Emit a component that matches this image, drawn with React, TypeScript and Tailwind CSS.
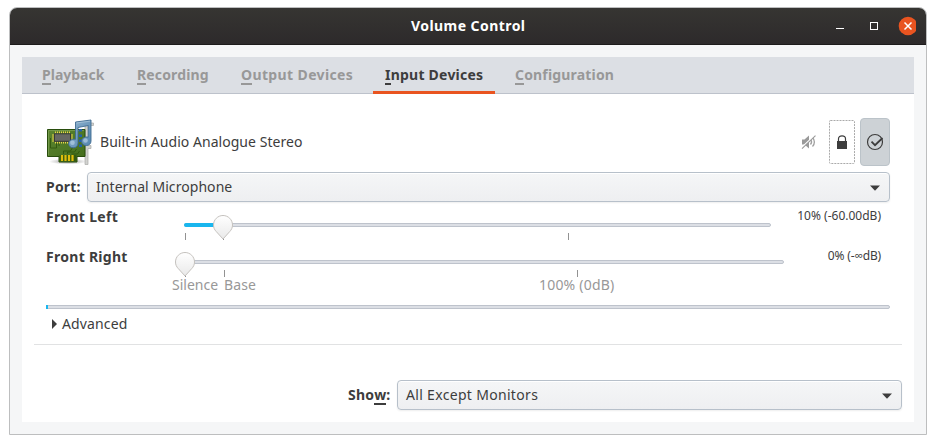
import React from 'react';

type TabProps = { label: string; active?: boolean; width: string; spacing: string };

function Tab({ label, active, width, spacing }: TabProps) {
  return (
    <div
      className={`relative flex h-[37px] shrink-0 items-center pb-[2px] pl-3 font-bold ${width} ${spacing} ${active ? 'text-[#3d3d3d]' : 'text-[#989898]'}`}
    >
      <span>
        <Mnemonic letter={label[0]} />
        {label.slice(1)}
      </span>
      {active && <div className="absolute bottom-0 left-0 h-[3px] w-[122px] bg-[#e95420]" />}
    </div>
  );
}

function Mnemonic({ letter }: { letter: string }) {
  return (
    <span className="relative inline-block">
      {letter}
      <span className="absolute bottom-0 left-0 h-[2px] w-full bg-current" />
    </span>
  );
}

function Combo({ label, width, spacing }: { label: string; width: string; spacing: string }) {
  return (
    <div
      className={`flex h-[30px] items-center justify-between rounded-[4px] border border-[#b7c0ca] bg-linear-to-b from-[#f5f6f7] to-[#eeeff1] pr-[9px] pl-2 shadow-[0_1px_2px_rgba(0,0,0,0.07),inset_0_1px_0_#fff] ${width}`}
    >
      <span className={spacing}>{label}</span>
      <svg width="10" height="6" viewBox="0 0 10 6" className="mt-px">
        <path d="M0 .5h10L5 5.700z" fill="#3d3d3d" />
      </svg>
    </div>
  );
}

function Thumb() {
  return (
    <svg width="20" height="25" viewBox="0 0 20 25" className="block">
      <defs>
        <linearGradient id="thumb" x1="0" y1="0" x2="0" y2="1">
          <stop offset="0" stopColor="#fff" />
          <stop offset="1" stopColor="#e9e9e9" />
        </linearGradient>
      </defs>
      <path
        d="M10 .5C4.800.5.5 4.700.5 10c0 2.700 1.100 4.900 2.800 6.600L10 24l6.700-7.400C18.400 14.900 19.500 12.700 19.500 10c0-5.300-4.300-9.500-9.500-9.500z"
        fill="url(#thumb)"
        stroke="#c4c1bd"
      />
    </svg>
  );
}

function SoundCard() {
  return (
    <svg width="48" height="48" viewBox="0 0 48 48">
      <defs>
        <linearGradient id="pcb" x1="0" y1="0" x2="1" y2="1">
          <stop offset="0" stopColor="#5c8530" />
          <stop offset="1" stopColor="#426c1b" />
        </linearGradient>
        <linearGradient id="note" x1="0" y1="0" x2="1" y2="1">
          <stop offset="0" stopColor="#91b4d0" />
          <stop offset="1" stopColor="#5485ae" />
        </linearGradient>
        <radialGradient id="shadow">
          <stop offset="0" stopColor="#000" stopOpacity=".4" />
          <stop offset="1" stopColor="#000" stopOpacity="0" />
        </radialGradient>
      </defs>
      <ellipse cx="22" cy="43.500" rx="19" ry="3" fill="url(#shadow)" />
      <path d="M41.500 7.500h6v-2.500h-8.500v41.500h3V30.500h3v-3h-3.500z" fill="#d1d2cf" stroke="#a9aba7" strokeWidth=".7" />
      <path d="M1.500 11.500h37.500v27h-8v5.500h-18v-5.500h-11.500z" fill="url(#pcb)" stroke="#284d0c" />
      <path d="M2.500 37.500v-25h35.500" fill="none" stroke="#80a457" strokeWidth=".7" />
      <path
        d="M4.500 20v10h6v-5M13 25v3M17.500 36v-3h7l3-5M21.500 36v-2h7l2-3M25.500 36h6l2-3"
        fill="none"
        stroke="#31570f"
        strokeWidth=".9"
      />
      <path d="M9 14.500h16M9 24.500h16" stroke="#edd44c" strokeWidth="2" strokeDasharray="1 1" />
      <path d="M7 16.500v7M26 16.500v7" stroke="#edd44c" strokeWidth="2" strokeDasharray="1 1" />
      <rect x="8.500" y="15.800" width="16" height="7.500" fill="#666863" stroke="#373936" />
      <path d="M13.500 37h17v6h-17z" fill="#345a10" />
      <path d="M16 37v6M19.500 37v6M23 37v6M26.500 37v6" stroke="#dfbd0d" strokeWidth="2.200" />
      <path d="M33 11h3v2.500h-3zm0 5.500h3v2.500h-3zm0 5h3v2.500h-3zm0 5h3v2.500h-3z" fill="#245eac" />
      <path
        d="M29.500 4 45 2v21c0 2.800-2 4.500-4.700 4.500-2.800 0-4.700-1.600-4.700-4.200 0-2.900 2.800-4.800 6.700-4.200V7.500l-10.300 2v15.500c0 3-2 4.800-4.800 4.800s-4.500-1.600-4.500-4.200c0-3 2.800-4.800 6.800-4.300z"
        fill="url(#note)"
        stroke="#3f6b91"
        strokeWidth=".9"
      />
      <circle cx="26.500" cy="24.800" r="2.300" fill="#b5cee2" opacity=".7" />
      <circle cx="39.500" cy="22.500" r="2.300" fill="#b5cee2" opacity=".7" />
      <path d="M30.500 5 44 3.200" stroke="#b0cadd" strokeWidth=".7" />
    </svg>
  );
}

function MutedSpeaker() {
  return (
    <svg width="16" height="16" viewBox="0 0 16 16" fill="none">
      <path d="M1 5.500h2.500L8 1.500v13l-4.500-4H1z" fill="#9a9a9a" />
      <path d="M9.500 5.500c1.300 1.500 1.300 3.500 0 5M11.500 3.500c2.500 2.600 2.500 6.400 0 9" stroke="#a0a0a0" strokeWidth="1.300" />
      <path d="M0 14.200 14.300.700" stroke="#fff" strokeWidth="1.300" />
      <path d="M1 14.700 14.500 1.700" stroke="#9a9a9a" strokeWidth="1.100" />
    </svg>
  );
}

const trough = 'h-1 rounded-full border border-[#bec3cc] bg-[#dcdfe5]';

export default function App() {
  return (
    <div className="h-[444px] w-[936px] overflow-hidden bg-white pt-[7px] pl-[9px] font-['Noto_Sans','Open_Sans',sans-serif] text-[14px] leading-5 whitespace-nowrap text-[#3d3d3d]">
      <div className="h-[428px] w-[918px] overflow-hidden rounded-t-[8px] border border-[#bdbebf] bg-[#f5f6f7]">
        <header className="flex h-[37px] items-center border-b border-[#1d1b1b] bg-linear-to-b from-[#363532] to-[#2d2a2b]">
          <div className="w-[401px]" />
          <h1 className="w-[425px] font-bold tracking-[0.44px] text-white">Volume Control</h1>
          <svg width="80" height="20" viewBox="0 0 80 20" fill="none">
            <path d="M0 12.500h8" stroke="#fff" />
            <rect x="34.500" y="6.500" width="7" height="7" stroke="#fff" />
            <circle cx="72" cy="10" r="9.300" fill="#e95420" />
            <path d="m68.500 6.500 7 7m0-7-7 7" stroke="#fff" strokeWidth="1.500" />
          </svg>
        </header>

        <main className="mt-3 ml-3 h-[365px] w-[892px] bg-white">
          <nav className="flex h-[37px] border-b border-[#bdc2cb] bg-[#dcdfe4] pl-2">
            <Tab label="Playback" width="w-[95px]" spacing="tracking-[0px]" />
            <Tab label="Recording" width="w-[104px]" spacing="tracking-[0.14px]" />
            <Tab label="Output Devices" width="w-[144px]" spacing="tracking-[0.37px]" />
            <Tab label="Input Devices" active width="w-[130px]" spacing="tracking-[0.23px]" />
            <Tab label="Configuration" width="w-[130px]" spacing="tracking-[0.17px]" />
          </nav>

          <section className="ml-6 w-[844px] pt-6">
            <div className="flex h-12 items-center">
              <SoundCard />
              <span className="ml-[6px] w-[701px] tracking-[0.04px]">Built-in Audio Analogue Stereo</span>
              <MutedSpeaker />
              <button className="relative ml-3 flex h-11 w-[26px] items-center justify-center">
                <svg width="26" height="44" viewBox="0 0 26 44" fill="none" className="absolute inset-0">
                  <rect x=".5" y=".5" width="25" height="43" rx="1" stroke="#aaa" strokeDasharray="2 1" />
                </svg>
                <svg width="10" height="14" viewBox="0 0 10 14">
                  <path d="M1.500 7V3.800C1.500-.1 8.500-.1 8.500 3.800V7" fill="none" stroke="#3d3d3d" strokeWidth="1.200" />
                  <path d="M0 6h10v8H0z" fill="#3d3d3d" />
                </svg>
              </button>
              <button className="ml-[5px] flex h-12 w-[30px] items-center justify-center rounded-[4px] border border-[#bbc3c9] bg-[#cdd2d6]">
                <svg width="18" height="18" viewBox="0 0 18 18" fill="none" stroke="#3d3d3d">
                  <circle cx="9" cy="9" r="7.500" strokeWidth="1.200" />
                  <path d="m5.500 8.700 3.500 3.500L16.500 5" strokeWidth="1.800" />
                </svg>
              </button>
            </div>

            <div className="mt-[6px] flex items-center">
              <span className="w-[41px] font-bold tracking-[0.2px]">Port:</span>
              <Combo label="Internal Microphone" width="w-[803px]" spacing="tracking-[0.06px]" />
            </div>

            <div className="flex h-10 pt-[5px]">
              <span className="w-[138px] font-bold tracking-[0.33px]">Front Left</span>
              <div className="relative mt-4 h-[17px] w-[587px]">
                <div className={trough} />
                <div className="absolute top-0 left-0 h-1 w-[39px] rounded-l-full bg-[#19b6ee]" />
                <div className="absolute top-[10px] left-[1px] h-[7px] w-px bg-[#929292]" />
                <div className="absolute top-[10px] left-[39px] h-[7px] w-px bg-[#929292]" />
                <div className="absolute top-[10px] left-[384px] h-[7px] w-px bg-[#929292]" />
                <div className="absolute -top-2 left-[29px]"><Thumb /></div>
              </div>
              <span className="mt-[-1px] flex-1 pr-[9px] text-right text-[12px] tracking-[0px]">10% (-60.00dB)</span>
            </div>

            <div className="flex h-[63px] pt-[5px]">
              <span className="w-[138px] font-bold tracking-[0.28px]">Front Right</span>
              <div className="relative mt-[13px] w-[600px]">
                <div className={trough} />
                <div className="absolute top-[10px] left-[1px] h-[7px] w-px bg-[#929292]" />
                <div className="absolute top-[10px] left-[40px] h-[7px] w-px bg-[#929292]" />
                <div className="absolute top-[10px] left-[393px] h-[7px] w-px bg-[#929292]" />
                <div className="absolute -top-2 left-[-9px]"><Thumb /></div>
                <div className="-ml-3 flex pt-[11px] text-[#989898]">
                  <span className="w-[52px] tracking-[0px]">Silence</span>
                  <span className="w-[315px] tracking-[0.1px]">Base</span>
                  <span className="tracking-[0.2px]">100% (0dB)</span>
                </div>
              </div>
              <span className="mt-[-1px] flex-1 pr-[9px] text-right text-[12px] tracking-[-0.15px]">0% (-∞dB)</span>
            </div>

            <div className={`${trough} relative`}>
              <div className="absolute -top-px -left-px h-1 w-[2px] bg-[#19b6ee]" />
            </div>

            <div className="mt-[5px] flex h-5 items-center pl-[6px]">
              <svg width="5" height="10" viewBox="0 0 5 10"><path d="M0 0v10l5-5z" fill="#3d3d3d" /></svg>
              <span className="ml-[5px] tracking-[0.14px]">Advanced</span>
            </div>
          </section>

          <div className="mt-[10px] ml-3 h-px w-[868px] bg-[#e1e2e3]" />
          <div className="mt-[35px] flex items-center pl-[326px]">
            <span className="w-[49px] font-bold tracking-[0.2px]">Sho<Mnemonic letter="w" />:</span>
            <Combo label="All Except Monitors" width="w-[505px]" spacing="tracking-[0.32px]" />
          </div>
        </main>
      </div>
    </div>
  );
}
